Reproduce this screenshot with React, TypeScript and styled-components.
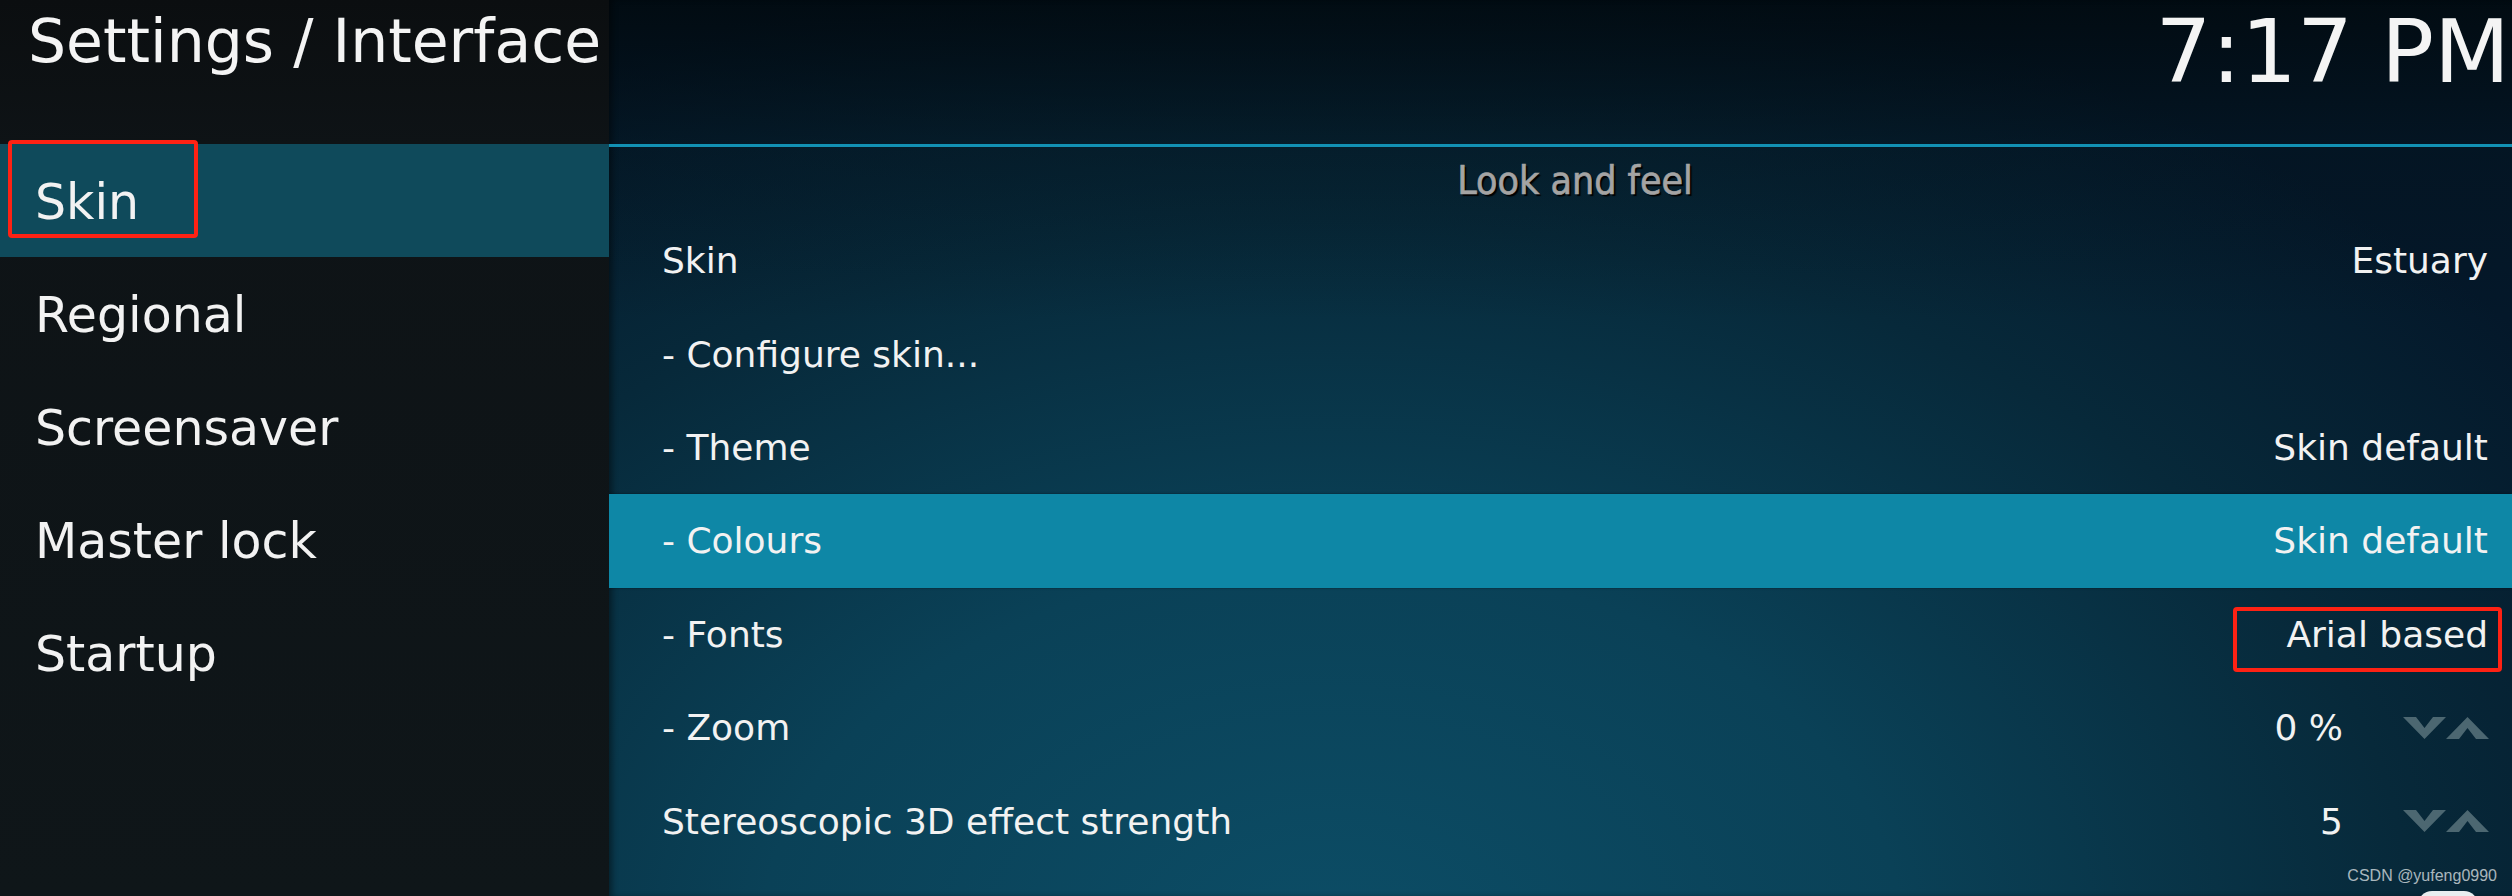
import React from 'react';
import styled, { createGlobalStyle } from 'styled-components';

const Global = createGlobalStyle`
  html, body { margin: 0; padding: 0; background: #0f1518; }
  body { width: 2512px; height: 896px; overflow: hidden; }
`;

const Screen = styled.div`
  position: relative;
  width: 2512px;
  height: 896px;
  overflow: hidden;
  display: flex;
  font-family: "DejaVu Sans", "Noto Sans", sans-serif;
  color: #f2f2f2;
`;

const Sidebar = styled.aside`
  width: 609px;
  flex: none;
  display: flex;
  flex-direction: column;
  background: linear-gradient(180deg, #0b0e10 0%, #0e1316 144px, #0f1619 100%);
`;

const Title = styled.h1`
  margin: 0;
  height: 144px;
  flex: none;
  box-sizing: border-box;
  padding: 11px 0 0 28px;
  font-size: 60px;
  line-height: 60px;
  font-weight: 400;
  white-space: nowrap;
  color: #f4f4f4;
`;

const NavList = styled.nav`
  display: flex;
  flex-direction: column;
`;

const NavItem = styled.div<{ $active?: boolean }>`
  height: 113px;
  flex: none;
  box-sizing: border-box;
  display: flex;
  align-items: center;
  padding: 4px 0 0 35px;
  font-size: 49px;
  white-space: nowrap;
  background: ${(p) => (p.$active ? '#0f4a5b' : 'transparent')};
`;

const Main = styled.main`
  flex: 1;
  min-width: 0;
  display: flex;
  flex-direction: column;
  position: relative;
  overflow: hidden;
  background:
    linear-gradient(180deg, rgba(1, 8, 12, 0.8) 0%, rgba(3, 14, 20, 0.3) 150px, rgba(0, 0, 0, 0) 320px),
    radial-gradient(ellipse 1500px 1000px at 38% 105%, #0c4d66 0%, #0a4157 38%, #07293a 72%, #04182a 100%);
  box-shadow: inset 5px 0 6px -2px rgba(0, 0, 0, 0.45);
`;

const TopBar = styled.header`
  height: 144px;
  flex: none;
  display: flex;
  justify-content: flex-end;
  align-items: flex-start;
`;

const Clock = styled.div`
  font-size: 88px;
  line-height: normal;
  padding: 0 2px 0 0;
  white-space: nowrap;
  color: #f4f4f4;
`;

const Divider = styled.div`
  height: 3px;
  flex: none;
  background: #1291b4;
`;

const GroupHeader = styled.div`
  height: 67px;
  flex: none;
  box-sizing: border-box;
  padding: 0 24px 0 53px;
  display: flex;
  align-items: center;
  justify-content: center;
  font-family: "DejaVu Sans Condensed", "DejaVu Sans", sans-serif;
  font-stretch: condensed;
  font-size: 39px;
  color: #a4a4a4;
  -webkit-text-stroke: 0.7px #a4a4a4;
  text-shadow: 2px 2px 1px #000;
`;

const Row = styled.div<{ $focused?: boolean }>`
  height: 93.4px;
  flex: none;
  box-sizing: border-box;
  padding: 0 24px 0 53px;
  display: flex;
  align-items: center;
  justify-content: space-between;
  font-size: 36px;
  white-space: nowrap;
  background: ${(p) => (p.$focused ? '#0e87a6' : 'transparent')};
  box-shadow: ${(p) => (p.$focused ? '0 0 2px rgba(0,0,0,0.5)' : 'none')};
`;

const Label = styled.span``;

const Value = styled.span`
  color: #f2f2f2;
`;

const Spinner = styled.div`
  display: flex;
  align-items: center;
  gap: 60px;
`;

const Arrows = styled.div`
  display: flex;
  width: 86px;
  height: 22px;
  margin-right: -1px;
`;

const Toggle = styled.div`
  width: 60px;
  height: 46px;
  margin-right: 10px;
  border-radius: 14px;
  background: #e8eef0;
`;

const Annotation = styled.div<{ $x: number; $y: number; $w: number; $h: number }>`
  position: absolute;
  left: ${(p) => p.$x}px;
  top: ${(p) => p.$y}px;
  width: ${(p) => p.$w}px;
  height: ${(p) => p.$h}px;
  box-sizing: border-box;
  border: 4px solid #fe2214;
  border-radius: 4px;
  pointer-events: none;
`;

const Watermark = styled.div`
  position: absolute;
  right: 15px;
  bottom: 11px;
  font-family: "Liberation Sans", Arial, sans-serif;
  font-size: 16px;
  color: rgba(235, 240, 242, 0.72);
  white-space: nowrap;
`;

const ArrowIcons: React.FC = () => (
  <Arrows>
    <svg width="43" height="22" viewBox="0 0 43 22">
      <polygon points="0,0 13,0 21.5,11 30,0 43,0 21.5,22" fill="#4c6771" />
    </svg>
    <svg width="43" height="22" viewBox="0 0 43 22">
      <polygon points="0,22 21.5,0 43,22 30,22 21.5,11 13,22" fill="#4c6771" />
    </svg>
  </Arrows>
);

const navItems = ['Skin', 'Regional', 'Screensaver', 'Master lock', 'Startup'];

type Setting = { id: string; label?: string; value?: string; spinner?: boolean; toggle?: boolean; focused?: boolean };

const settings: Setting[] = [
  { id: 'skin', label: 'Skin', value: 'Estuary' },
  { id: 'configure', label: '- Configure skin...' },
  { id: 'theme', label: '- Theme', value: 'Skin default' },
  { id: 'colours', label: '- Colours', value: 'Skin default', focused: true },
  { id: 'fonts', label: '- Fonts', value: 'Arial based' },
  { id: 'zoom', label: '- Zoom', value: '0 %', spinner: true },
  { id: 'stereo', label: 'Stereoscopic 3D effect strength', value: '5', spinner: true },
  { id: 'rss', toggle: true },
];

export default function App() {
  return (
    <Screen>
      <Global />
      <Sidebar>
        <Title>Settings / Interface</Title>
        <NavList>
          {navItems.map((n, i) => (
            <NavItem key={n} $active={i === 0}>
              {n}
            </NavItem>
          ))}
        </NavList>
      </Sidebar>
      <Main>
        <TopBar>
          <Clock>7:17 PM</Clock>
        </TopBar>
        <Divider />
        <GroupHeader>Look and feel</GroupHeader>
        {settings.map((s) => (
          <Row key={s.id} $focused={s.focused}>
            <Label>{s.label}</Label>
            {s.spinner ? (
              <Spinner>
                <Value>{s.value}</Value>
                <ArrowIcons />
              </Spinner>
            ) : s.toggle ? (
              <Toggle />
            ) : s.value ? (
              <Value>{s.value}</Value>
            ) : null}
          </Row>
        ))}
      </Main>
      <Annotation $x={8} $y={140} $w={190} $h={98} />
      <Annotation $x={2233} $y={607} $w={269} $h={65} />
      <Watermark>CSDN @yufeng0990</Watermark>
    </Screen>
  );
}
